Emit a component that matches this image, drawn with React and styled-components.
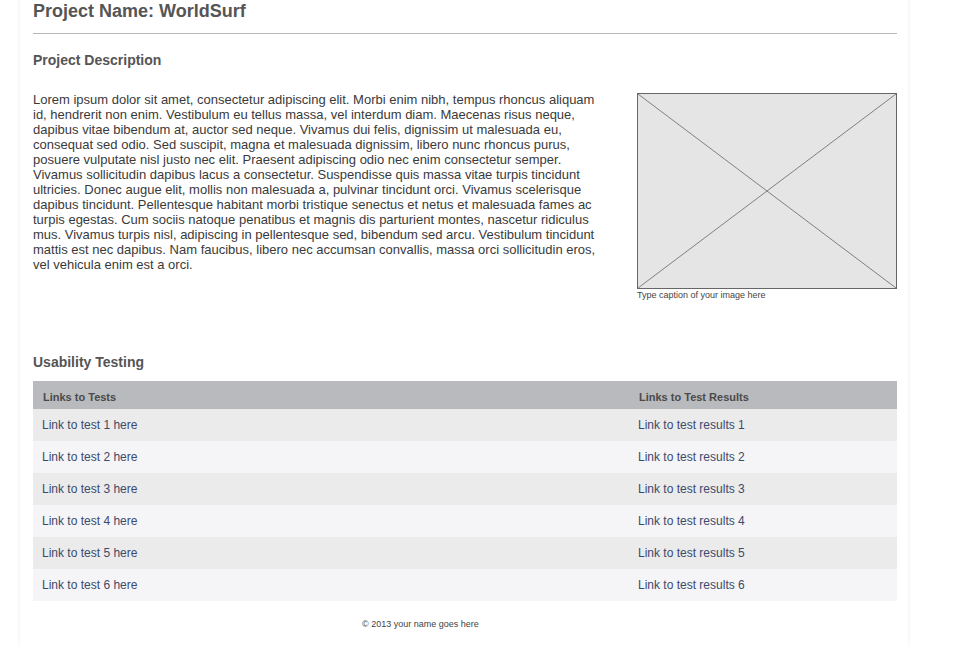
import React from 'react'
import styled, { createGlobalStyle } from 'styled-components'

const Global = createGlobalStyle`
    body {
        margin: 0;
        background: #fff;
        font-family: "Liberation Sans", Arial, sans-serif;
        color: #444;
    }
`

const Card = styled.div`
    width: 888px;
    margin: -20px 0 0 20px;
    padding: 20px 11px 4px 13px;
    box-sizing: border-box;
    background: #fff;
    box-shadow: 0 1px 4px rgba(0, 0, 0, 0.07);
`

const Title = styled.h1`
    margin: 0;
    font-size: 18px;
    line-height: 22px;
    font-weight: bold;
    color: #555;
`

const Rule = styled.hr`
    border: none;
    border-top: 1px solid #b8b8b8;
    margin: 11px 0 0;
`

const SectionTitle = styled.h2`
    margin: ${p => p.$top}px 0 0;
    font-size: 14px;
    line-height: 18px;
    font-weight: bold;
    color: #555;
`

const DescRow = styled.div`
    display: flex;
    justify-content: space-between;
    align-items: flex-start;
    margin-top: 24px;
`

const Paragraph = styled.p`
    margin: -1px 0 0;
    width: 576px;
    font-size: 13px;
    line-height: 15px;
    color: #3a3a3a;
`

const Figure = styled.figure`
    margin: 0;
    width: 260px;
`

const Placeholder = styled.svg`
    display: block;
    width: 260px;
    height: 196px;
`

const Caption = styled.figcaption`
    font-size: 9px;
    line-height: 12px;
    color: #444;
`

const Table = styled.table`
    width: 100%;
    margin-top: 10px;
    border-collapse: collapse;
    table-layout: fixed;
    font-size: 12px;
`

const HeadCell = styled.th`
    box-sizing: border-box;
    background: #b9babd;
    height: 28px;
    padding: 3px 0 0 10px;
    text-align: left;
    font-size: 11px;
    font-weight: bold;
    color: #4a4a4a;
    width: ${p => p.$w || 'auto'};
`

const Row = styled.tr`
    background: ${p => (p.$odd ? '#ebebeb' : '#f5f5f7')};
`

const Cell = styled.td`
    height: 32px;
    padding: 0 0 0 9px;
    color: #3b4a6b;
`

const Footer = styled.div`
    padding: 18px 0 13px 329px;
    font-size: 9px;
    line-height: 11px;
    color: #444;
`

const tests = [1, 2, 3, 4, 5, 6]

export default function App() {
    return (
        <>
            <Global />
            <Card>
                <Title>Project Name: WorldSurf</Title>
                <Rule />
                <SectionTitle $top={17}>Project Description</SectionTitle>
                <DescRow>
                    <Paragraph>
                        Lorem ipsum dolor sit amet, consectetur adipiscing elit. Morbi enim nibh, tempus rhoncus aliquam id, hendrerit non enim. Vestibulum eu tellus massa, vel interdum diam. Maecenas risus neque, dapibus vitae bibendum at, auctor sed neque. Vivamus dui felis, dignissim ut malesuada eu, consequat sed odio. Sed suscipit, magna et malesuada dignissim, libero nunc rhoncus purus, posuere vulputate nisl justo nec elit. Praesent adipiscing odio nec enim consectetur semper. Vivamus sollicitudin dapibus lacus a consectetur. Suspendisse quis massa vitae turpis tincidunt ultricies. Donec augue elit, mollis non malesuada a, pulvinar tincidunt orci. Vivamus scelerisque dapibus tincidunt. Pellentesque habitant morbi tristique senectus et netus et malesuada fames ac turpis egestas. Cum sociis natoque penatibus et magnis dis parturient montes, nascetur ridiculus mus. Vivamus turpis nisl, adipiscing in pellentesque sed, bibendum sed arcu. Vestibulum tincidunt mattis est nec dapibus. Nam faucibus, libero nec accumsan convallis, massa orci sollicitudin eros, vel vehicula enim est a orci.
                    </Paragraph>
                    <Figure>
                        <Placeholder viewBox="0 0 260 196">
                            <rect x="0.5" y="0.5" width="259" height="195" fill="#e5e5e5" stroke="#666" />
                            <line x1="1" y1="1" x2="259" y2="195" stroke="#666" strokeWidth="0.8" />
                            <line x1="259" y1="1" x2="1" y2="195" stroke="#666" strokeWidth="0.8" />
                        </Placeholder>
                        <Caption>Type caption of your image here</Caption>
                    </Figure>
                </DescRow>
                <SectionTitle $top={52}>Usability Testing</SectionTitle>
                <Table>
                    <thead>
                        <tr>
                            <HeadCell $w="596px">Links to Tests</HeadCell>
                            <HeadCell>Links to Test Results</HeadCell>
                        </tr>
                    </thead>
                    <tbody>
                        {tests.map(n => (
                            <Row key={n} $odd={n % 2 === 1}>
                                <Cell>Link to test {n} here</Cell>
                                <Cell>Link to test results {n}</Cell>
                            </Row>
                        ))}
                    </tbody>
                </Table>
                <Footer>© 2013 your name goes here</Footer>
            </Card>
        </>
    )
}
